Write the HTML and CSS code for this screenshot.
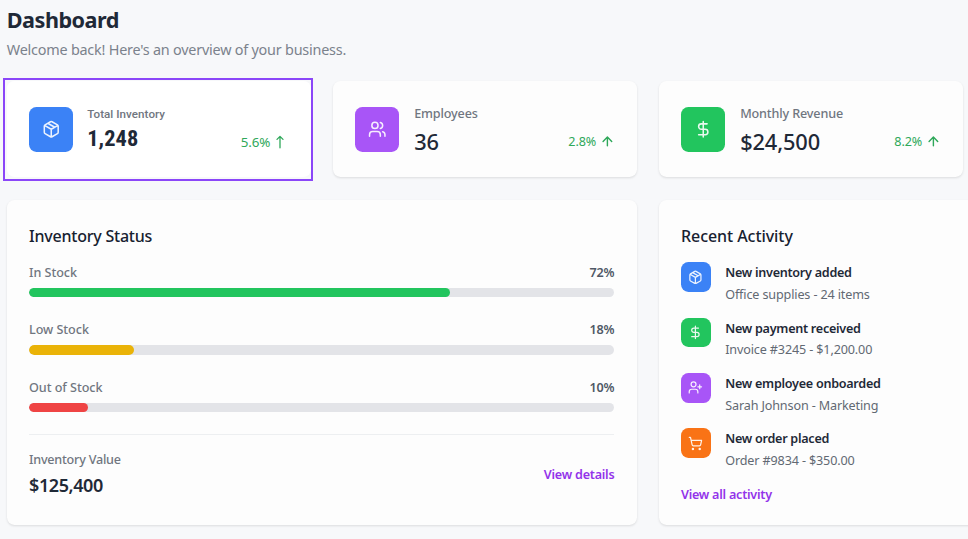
FILE: index.html
```html
<!DOCTYPE html>
<html lang="en">
<head>
<meta charset="utf-8">
<title>Dashboard</title>
<link rel="stylesheet" href="styles.css">
</head>
<body>
<svg class="defs" aria-hidden="true">
  <symbol id="package" viewBox="0 0 24 24"><path d="m7.5 4.27 9 5.15M21 8a2 2 0 0 0-1-1.73l-7-4a2 2 0 0 0-2 0l-7 4A2 2 0 0 0 3 8v8a2 2 0 0 0 1 1.73l7 4a2 2 0 0 0 2 0l7-4A2 2 0 0 0 21 16ZM3.3 7l8.7 5 8.7-5M12 22V12"/></symbol>
  <symbol id="users" viewBox="0 0 24 24"><path d="M16 21v-2a4 4 0 0 0-4-4H6a4 4 0 0 0-4 4v2M22 21v-2a4 4 0 0 0-3-3.87M16 3.13a4 4 0 0 1 0 7.75"/><circle cx="9" cy="7" r="4"/></symbol>
  <symbol id="dollar" viewBox="0 0 24 24"><path d="M12 2v20M17 5H9.5a3.5 3.5 0 0 0 0 7h5a3.5 3.5 0 0 1 0 7H6"/></symbol>
  <symbol id="user-plus" viewBox="0 0 24 24"><path d="M16 21v-2a4 4 0 0 0-4-4H6a4 4 0 0 0-4 4v2M19 8v6M22 11h-6"/><circle cx="9" cy="7" r="4"/></symbol>
  <symbol id="cart" viewBox="0 0 24 24"><circle cx="8" cy="21" r="1"/><circle cx="19" cy="21" r="1"/><path d="M2.05 2.05h2l2.66 12.42a2 2 0 0 0 2 1.58h9.78a2 2 0 0 0 1.95-1.57l1.65-7.43H5.12"/></symbol>
  <symbol id="arrow-up" viewBox="0 0 24 24"><path d="m5 12 7-7 7 7M12 19V5"/></symbol>
  <symbol id="arrow-tall" viewBox="0 0 10 14"><path d="M2 4.4 5 1.4l3 3M5 12.8V1.4"/></symbol>
</svg>
<main class="dashboard">
  <header class="header">
    <h1>Dashboard</h1>
    <p>Welcome back! Here's an overview of your business.</p>
  </header>
  <section class="grid">
    <article class="card stat selected">
      <span class="tile blue"><svg><use href="#package"/></svg></span>
      <div class="stat-body">
        <h3>Total Inventory</h3>
        <div class="stat-row"><strong>1,248</strong><span class="trend">5.6% <svg><use href="#arrow-tall"/></svg></span></div>
      </div>
    </article>
    <article class="card stat">
      <span class="tile purple"><svg><use href="#users"/></svg></span>
      <div class="stat-body">
        <h3>Employees</h3>
        <div class="stat-row"><strong>36</strong><span class="trend">2.8% <svg><use href="#arrow-up"/></svg></span></div>
      </div>
    </article>
    <article class="card stat">
      <span class="tile green"><svg><use href="#dollar"/></svg></span>
      <div class="stat-body">
        <h3>Monthly Revenue</h3>
        <div class="stat-row"><strong>$24,500</strong><span class="trend">8.2% <svg><use href="#arrow-up"/></svg></span></div>
      </div>
    </article>
    <article class="card panel status">
      <h2>Inventory Status</h2>
      <div class="level">
        <div class="level-head"><span>In Stock</span><b>72%</b></div>
        <div class="track"><div class="fill green" style="width:72%"></div></div>
      </div>
      <div class="level">
        <div class="level-head"><span>Low Stock</span><b>18%</b></div>
        <div class="track"><div class="fill yellow" style="width:18%"></div></div>
      </div>
      <div class="level">
        <div class="level-head"><span>Out of Stock</span><b>10%</b></div>
        <div class="track"><div class="fill red" style="width:10%"></div></div>
      </div>
      <footer class="value">
        <div><span class="value-label">Inventory Value</span><strong>$125,400</strong></div>
        <a class="link">View details</a>
      </footer>
    </article>
    <article class="card panel activity">
      <h2>Recent Activity</h2>
      <ul>
        <li><span class="tile small blue"><svg><use href="#package"/></svg></span><div><h4>New inventory added</h4><p>Office supplies - 24 items</p></div></li>
        <li><span class="tile small green"><svg><use href="#dollar"/></svg></span><div><h4>New payment received</h4><p>Invoice #3245 - $1,200.00</p></div></li>
        <li><span class="tile small purple"><svg><use href="#user-plus"/></svg></span><div><h4>New employee onboarded</h4><p>Sarah Johnson - Marketing</p></div></li>
        <li><span class="tile small orange"><svg><use href="#cart"/></svg></span><div><h4>New order placed</h4><p>Order #9834 - $350.00</p></div></li>
      </ul>
      <a class="link">View all activity</a>
    </article>
  </section>
</main>
</body>
</html>
```
FILE: styles.css
```css
* { box-sizing: border-box; margin: 0; padding: 0; }
body {
  width: 968px;
  height: 539px;
  overflow: hidden;
  background: #f7f8fa;
  color: #1f2937;
  font: 12.6px/18.5px "Noto Sans", "Open Sans", sans-serif;
}
.defs { display: none; }
svg { fill: none; stroke: currentColor; stroke-width: 2; stroke-linecap: round; stroke-linejoin: round; }
.dashboard { padding: 5.4px 0 0 6.8px; }
.header { height: 76px; }
.header h1 { font-size: 21.6px; line-height: 29.6px; font-weight: 700; letter-spacing: -0.5px; }
.header p { margin-top: 4px; font-size: 14.4px; line-height: 22.2px; letter-spacing: -0.22px; color: #7b828c; }

.grid { display: grid; grid-template-columns: 303.8px 303.8px 303.8px; gap: 22.2px; }
.card {
  background: #fdfdfd;
  border-radius: 7.4px;
  box-shadow: 0 1px 3px rgba(0, 0, 0, .08), 0 1px 2px rgba(0, 0, 0, .04);
}
.stat { display: flex; align-items: center; height: 96px; padding: 0 22.2px; gap: 14.8px; }
.tile {
  display: flex;
  align-items: center;
  justify-content: center;
  flex: none;
  width: 44.4px;
  height: 44.4px;
  border-radius: 7.4px;
  color: #fff;
}
.tile svg { width: 18.5px; height: 18.5px; opacity: .9; }
.small { width: 29.6px; height: 29.6px; }
.small svg { width: 14.8px; height: 14.8px; }
.blue { background: #3b82f6; }
.purple { background: #a855f7; }
.green { background: #22c55e; }
.orange { background: #f97316; }
.yellow { background: #eab308; }
.red { background: #ef4444; }
.stat-body { flex: 1; padding-top: 4px; }
.stat h3 { font-size: 12.6px; font-weight: 500; letter-spacing: -.14px; color: #707680; }
.stat-row { display: flex; justify-content: space-between; align-items: flex-start; height: 33.3px; }
.stat-row strong { font-size: 21.8px; line-height: 35.5px; font-weight: 550; letter-spacing: -.12px; }
.trend { display: flex; align-items: center; gap: 3.4px; margin-top: 9px; letter-spacing: -.1px; color: #2fa85a; }
.trend svg { width: 14.8px; height: 14.8px; margin-top: -2.6px; stroke-width: 2.3; }

.selected { position: relative; background: #fff; box-shadow: none; }
.selected::before {
  content: "";
  position: absolute;
  inset: -3.4px -2.4px -3.6px -3.8px;
  border: 2px solid #8b46f8;
}
.selected h3 { margin-left: -1px; font: 500 11.6px/18.5px Roboto, sans-serif; letter-spacing: .05px; }
.selected strong { margin-left: -1px; font: 700 22.4px/28px "Roboto Condensed", Roboto, sans-serif; letter-spacing: .1px; }
.selected .trend { font-weight: 400; font-size: 13.4px; gap: 5px; margin-right: 3px; margin-top: 9.4px; }
.selected .trend svg { width: 10px; height: 14px; stroke-width: 1.3; margin-top: -1px; }

.panel { height: 325.6px; padding: 25.9px 22.2px 0; }
.panel h2 { font-size: 16px; line-height: 22.2px; font-weight: 550; letter-spacing: -.06px; color: #172130; }
.status { grid-column: span 2; }
.status h2 { letter-spacing: -.22px; margin-bottom: 16.6px; }
.level { height: 57.2px; }
.level-head { display: flex; justify-content: space-between; font-weight: 500; color: #707680; }
.level-head span { letter-spacing: -.04px; }
.level-head b { font-weight: 600; letter-spacing: -.2px; color: #4f5866; }
.track { margin-top: 5.4px; height: 9.25px; border-radius: 5px; background: #e3e4e8; overflow: hidden; }
.fill { height: 100%; border-radius: 5px; }
.value {
  display: flex;
  justify-content: space-between;
  align-items: center;
  margin-top: -1.8px;
  padding-top: 16.4px;
  border-top: 1px solid #edeff1;
}
.value-label { display: block; font-weight: 500; letter-spacing: -.22px; color: #707680; }
.value strong { display: block; margin-top: 2.4px; font-size: 18px; line-height: 27px; font-weight: 600; letter-spacing: -.4px; }
.link { font-weight: 600; letter-spacing: -.24px; color: #9333ea; }

.activity { width: 340px; }
.activity ul { list-style: none; margin-top: 14.5px; }
.activity li { display: flex; gap: 14.7px; height: 55.4px; }
.activity h4 { font-size: 12.6px; line-height: 20px; margin-top: 1px; font-weight: 600; letter-spacing: -.27px; }
.activity li p { margin-top: 1.6px; line-height: 19px; letter-spacing: -.14px; color: #626973; }
.activity .link { display: block; margin-top: 2.2px; }
```
